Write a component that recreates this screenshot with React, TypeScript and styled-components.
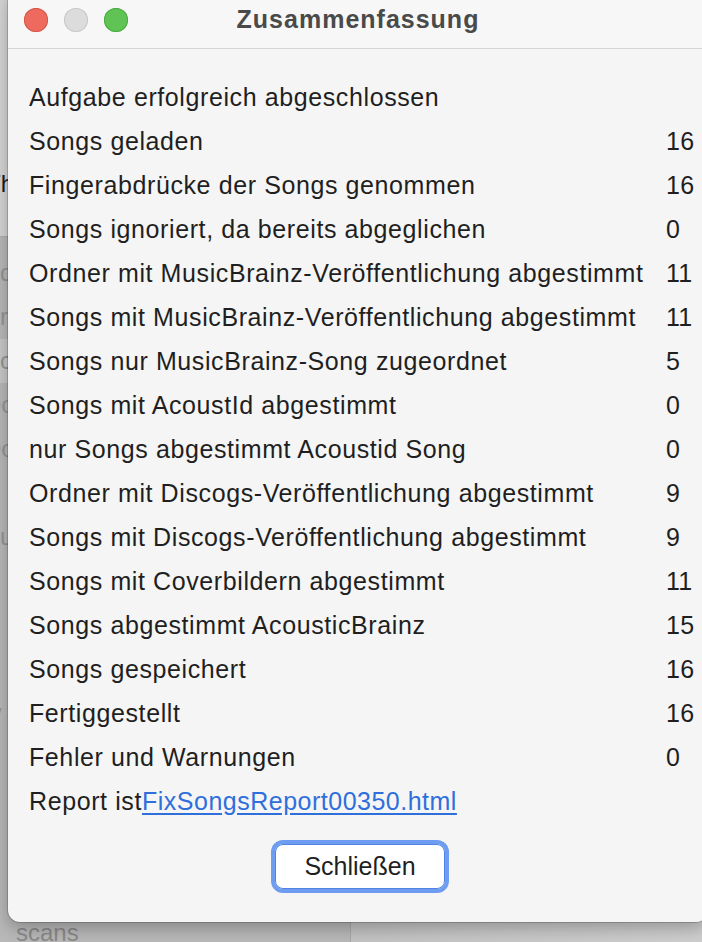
import styled, { createGlobalStyle } from "styled-components";

const GlobalStyle = createGlobalStyle`
  html, body {
    margin: 0;
    padding: 0;
    width: 702px;
    height: 942px;
    overflow: hidden;
    font-family: "Liberation Sans", Arial, sans-serif;
  }
`;

interface Row {
  label: string;
  value?: string;
}

const rows: Row[] = [
  { label: "Aufgabe erfolgreich abgeschlossen" },
  { label: "Songs geladen", value: "16" },
  { label: "Fingerabdrücke der Songs genommen", value: "16" },
  { label: "Songs ignoriert, da bereits abgeglichen", value: "0" },
  { label: "Ordner mit MusicBrainz-Veröffentlichung abgestimmt", value: "11" },
  { label: "Songs mit MusicBrainz-Veröffentlichung abgestimmt", value: "11" },
  { label: "Songs nur MusicBrainz-Song zugeordnet", value: "5" },
  { label: "Songs mit AcoustId abgestimmt", value: "0" },
  { label: "nur Songs abgestimmt Acoustid Song", value: "0" },
  { label: "Ordner mit Discogs-Veröffentlichung abgestimmt", value: "9" },
  { label: "Songs mit Discogs-Veröffentlichung abgestimmt", value: "9" },
  { label: "Songs mit Coverbildern abgestimmt", value: "11" },
  { label: "Songs abgestimmt AcousticBrainz", value: "15" },
  { label: "Songs gespeichert", value: "16" },
  { label: "Fertiggestellt", value: "16" },
  { label: "Fehler und Warnungen", value: "0" },
];

// fragments of the window behind the dialog, mostly hidden by it
const sideItems = ["Edit", "Pr", "Sc", "Doc", "Doc", "", "Eu", "a", "f", "l", "w", "r", "r"];

const Desktop = styled.div`
  position: relative;
  width: 702px;
  height: 942px;
  display: flex;
  background: #c6c6c6;
`;

const BackSidebar = styled.div`
  width: 350px;
  display: flex;
  flex-direction: column;
  border-right: 1px solid #a9a9a9;
`;

const BackToolbar = styled.div`
  height: 237px;
  background: #d6d6d6;
  border-bottom: 1px solid #b0b0b0;
  display: flex;
  flex-direction: column;
  justify-content: flex-end;
  padding-bottom: 38px;
  box-sizing: border-box;
  font-size: 24px;
  color: #1e1e1e;
`;

const ToolbarText = styled.div`
  margin-left: -14px;
`;

const BackList = styled.div`
  flex: 1;
  background: #b9b9b9;
  display: flex;
  flex-direction: column;
  padding-top: 14px;
  font-size: 24px;
`;

const SideItem = styled.div<{ $selected?: boolean }>`
  height: 44px;
  line-height: 44px;
  color: #959595;
  background: ${(p) => (p.$selected ? "#c8c8c8" : "transparent")};
  margin-left: -16px;
  white-space: nowrap;
`;

const ScansLabel = styled.div`
  margin-top: auto;
  padding-left: 16px;
  font-size: 24px;
  color: #8a8a8a;
  line-height: 22px;
  height: 20px;
  overflow: hidden;
`;

const BackMain = styled.div`
  flex: 1;
  background: linear-gradient(90deg, #c3c3c3 0%, #cfcfcf 100%);
`;

const Dialog = styled.div`
  position: absolute;
  left: 8px;
  top: -12px;
  width: 700px;
  height: 934px;
  background: #f5f5f5;
  border-radius: 12px;
  box-shadow: 0 0 0 1px rgba(0, 0, 0, 0.18), 0 6px 18px rgba(0, 0, 0, 0.28);
  display: flex;
  flex-direction: column;
  overflow: hidden;
`;

const TitleBar = styled.div`
  height: 61px;
  padding-top: 12px;
  padding-bottom: 8px;
  box-sizing: border-box;
  background: #f7f7f7;
  border-bottom: 1px solid #d4d4d4;
  display: flex;
  align-items: center;
  position: relative;
`;

const Lights = styled.div`
  display: flex;
  gap: 16px;
  padding-left: 16px;
`;

const Light = styled.span<{ $color: string; $border: string }>`
  width: 24px;
  height: 24px;
  border-radius: 50%;
  background: ${(p) => p.$color};
  box-shadow: inset 0 0 0 1px ${(p) => p.$border};
`;

const Title = styled.div`
  position: absolute;
  left: 0;
  right: 0;
  top: 12px;
  bottom: 9px;
  display: flex;
  align-items: center;
  justify-content: center;
  font-size: 25px;
  letter-spacing: 1px;
  font-weight: bold;
  color: #4a4a4a;
`;

const Body = styled.div`
  flex: 1;
  padding: 26px 0 0 21px;
  display: flex;
  flex-direction: column;
`;

const Grid = styled.div`
  display: grid;
  grid-template-columns: 637px auto;
  grid-auto-rows: 44px;
  align-items: center;
  font-size: 25px;
  letter-spacing: 0.6px;
  color: #1f1f1f;
`;

const Label = styled.div<{ $span?: boolean }>`
  white-space: nowrap;
  grid-column: ${(p) => (p.$span ? "1 / span 2" : "auto")};
`;

const Value = styled.div`
  letter-spacing: 0.3px;
`;

const Link = styled.a`
  color: #2f6fdc;
  letter-spacing: 0.5px;
  text-decoration: underline;
  text-underline-offset: 3px;
`;

const ButtonRow = styled.div`
  display: flex;
  justify-content: center;
  padding-top: 17px;
  padding-right: 17px;
`;

const CloseButton = styled.button`
  width: 178px;
  height: 53px;
  border-radius: 12px;
  border: 4px solid #6e9cf0;
  background: #ffffff;
  font-family: inherit;
  font-size: 25px;
  color: #1f1f1f;
  box-shadow: inset 0 0 0 1px #4f84e4;
`;

export default function App() {
  return (
    <>
      <GlobalStyle />
      <Desktop>
        <BackSidebar>
          <BackToolbar>
            <ToolbarText>Th</ToolbarText>
          </BackToolbar>
          <BackList>
            {sideItems.map((t, i) => (
              <SideItem key={i} $selected={i === 2}>
                {t}
              </SideItem>
            ))}
            <ScansLabel>scans</ScansLabel>
          </BackList>
        </BackSidebar>
        <BackMain />
        <Dialog>
          <TitleBar>
            <Lights>
              <Light $color="#ee6a5e" $border="#d5574c" />
              <Light $color="#dcdcdc" $border="#c8c8c8" />
              <Light $color="#5fc454" $border="#4ea944" />
            </Lights>
            <Title>Zusammenfassung</Title>
          </TitleBar>
          <Body>
            <Grid>
              {rows.map((r, i) =>
                r.value === undefined ? (
                  <Label key={i} $span>
                    {r.label}
                  </Label>
                ) : (
                  [
                    <Label key={`l${i}`}>{r.label}</Label>,
                    <Value key={`v${i}`}>{r.value}</Value>,
                  ]
                )
              )}
              <Label $span>
                Report ist<Link href="#">FixSongsReport00350.html</Link>
              </Label>
            </Grid>
            <ButtonRow>
              <CloseButton>Schließen</CloseButton>
            </ButtonRow>
          </Body>
        </Dialog>
      </Desktop>
    </>
  );
}
